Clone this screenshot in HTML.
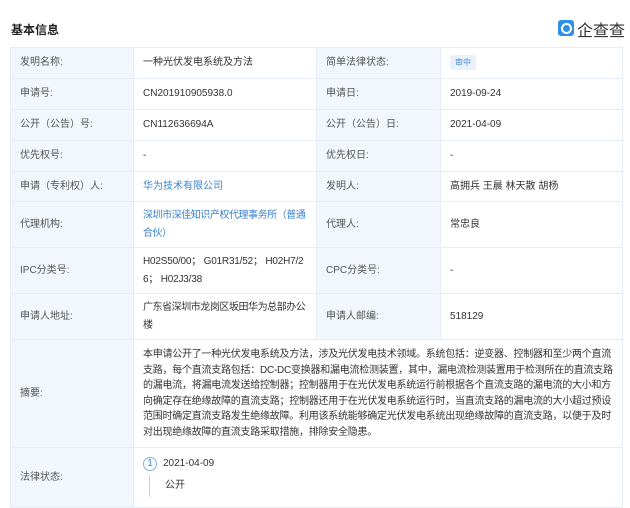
<!DOCTYPE html>
<html><head><meta charset="utf-8"><style>
*{margin:0;padding:0;box-sizing:border-box}
body{width:630px;height:499px;overflow:hidden;background:#fff;font-family:"Liberation Sans","Noto Sans CJK SC",sans-serif;color:#333;font-size:10px;position:relative}
.h{position:absolute;left:11px;top:21px;font-size:12px;font-weight:bold;color:#222}
.logo{position:absolute;left:558px;top:20px;width:16px;height:16px;background:#2f8fe6;border-radius:3px}
.logo:after{content:"";position:absolute;left:3px;top:3px;width:7px;height:7px;border:2px solid #fff;border-radius:50%}
.lt{position:absolute;left:577px;top:17px;font-size:16px;color:#333}
table{position:absolute;left:10px;top:47px;width:612px;border-collapse:collapse;table-layout:fixed}
td{border:1px solid #e6edf5;padding:0 3px 0 9px;line-height:18px;vertical-align:middle;overflow:hidden}
td.l{background:#f2f7fd;color:#555}
.z{letter-spacing:-0.25px}
.b{color:#3b82cf}
.tag{display:inline-block;background:#e9f2fc;color:#4a8fdc;font-size:8px;padding:0 5px;line-height:15px;border-radius:2px}
.c{display:inline-block;width:14px;height:14px;border:1px solid #7fb0e6;border-radius:50%;text-align:center;line-height:12px;font-size:10px;color:#3b82cf;margin-right:6px}
</style></head><body>
<div class="h">基本信息</div>
<div class="logo"></div><div class="lt">企查查</div>
<table>
<colgroup><col style="width:123px"><col style="width:183px"><col style="width:124px"><col style="width:182px"></colgroup>
<tr style="height:31px"><td class="l">发明名称:</td><td>一种光伏发电系统及方法</td><td class="l">简单法律状态:</td><td><span class="tag">审中</span></td></tr>
<tr style="height:31px"><td class="l">申请号:</td><td>CN201910905938.0</td><td class="l">申请日:</td><td>2019-09-24</td></tr>
<tr style="height:31px"><td class="l">公开（公告）号:</td><td>CN112636694A</td><td class="l">公开（公告）日:</td><td>2021-04-09</td></tr>
<tr style="height:31px"><td class="l">优先权号:</td><td>-</td><td class="l">优先权日:</td><td>-</td></tr>
<tr style="height:30px"><td class="l">申请（专利权）人:</td><td class="b">华为技术有限公司</td><td class="l">发明人:</td><td>高拥兵 王晨 林天散 胡杨</td></tr>
<tr style="height:46px"><td class="l">代理机构:</td><td class="b z" style="letter-spacing:-0.45px">深圳市深佳知识产权代理事务所（普通合伙）</td><td class="l">代理人:</td><td>常忠良</td></tr>
<tr style="height:46px"><td class="l">IPC分类号:</td><td style="word-break:break-all;letter-spacing:-0.2px">H02S50/00； G01R31/52； H02H7/26； H02J3/38</td><td class="l">CPC分类号:</td><td>-</td></tr>
<tr style="height:46px"><td class="l">申请人地址:</td><td class="z" style="letter-spacing:-0.45px">广东省深圳市龙岗区坂田华为总部办公楼</td><td class="l">申请人邮编:</td><td>518129</td></tr>
<tr style="height:108px"><td class="l">摘要:</td><td colspan="3" class="z" style="line-height:15.5px;padding-right:8px">本申请公开了一种光伏发电系统及方法，涉及光伏发电技术领域。系统包括：逆变器、控制器和至少两个直流支路，每个直流支路包括：DC-DC变换器和漏电流检测装置，其中，漏电流检测装置用于检测所在的直流支路的漏电流，将漏电流发送给控制器；控制器用于在光伏发电系统运行前根据各个直流支路的漏电流的大小和方向确定存在绝缘故障的直流支路；控制器还用于在光伏发电系统运行时，当直流支路的漏电流的大小超过预设范围时确定直流支路发生绝缘故障。利用该系统能够确定光伏发电系统出现绝缘故障的直流支路，以便于及时对出现绝缘故障的直流支路采取措施，排除安全隐患。</td></tr>
<tr style="height:60px"><td class="l" style="vertical-align:top;padding-top:21px">法律状态:</td><td colspan="3" style="vertical-align:top;padding-top:7px"><div><span class="c">1</span>2021-04-09</div><div style="margin-left:6px;border-left:1px solid #ccc;padding-left:15px;margin-top:2px;line-height:22px">公开</div></td></tr>
</table>
</body></html>
